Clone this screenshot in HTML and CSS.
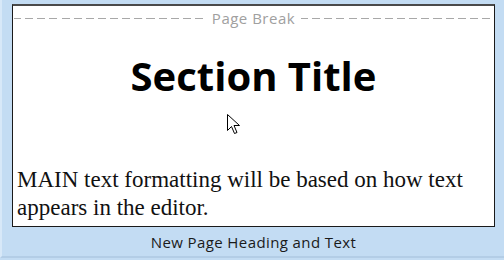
FILE: index.html
```html
<!DOCTYPE html>
<html lang="en">
<head>
    <meta charset="UTF-8">
    <meta name="viewport" content="width=device-width, initial-scale=1.0">
    <title>New Page Heading and Text</title>
    <link rel="stylesheet" href="styles.css">
</head>
<body>
    <div class="frame">
        <div class="page">
            <div class="page-break">
                <span class="dash"></span>
                <span class="break-label">Page Break</span>
                <span class="dash"></span>
            </div>
            <h1 class="section-title">Section Title</h1>
            <p class="main-text">MAIN text formatting will be based on how text appears in the editor.</p>
            <svg class="cursor" width="13" height="21" viewBox="0 0 13 21">
                <path d="M0.5 0.5 L0.5 16.5 L4.5 12.5 L7.5 19.5 L10 18.5 L7 11.5 L12.5 11.5 Z" fill="#fff" stroke="#000" stroke-width="1"/>
            </svg>
        </div>
        <div class="caption">New Page Heading and Text</div>
    </div>
</body>
</html>
```

FILE: styles.css
```css
body {
    margin: 0;
    padding: 0;
    background-color: #c3dcf3;
}

.frame {
    height: 258px;
    padding: 4px 9px 0 10px;
    box-sizing: border-box;
    background-color: #c3dcf3;
    border-left: 2px solid #d7e8f8;
    border-bottom: 2px solid #b3cde6;
}

.page {
    position: relative;
    height: 223px;
    box-sizing: border-box;
    background-color: white;
    border: 1px solid #1a1a1a;
    border-top: 2px solid #4a4a4a;
}

.page-break {
    display: flex;
    align-items: flex-start;
    gap: 6px;
    height: 32px;
    padding: 0 1px;
    margin-top: 2px;
}

.dash {
    flex: 1;
    margin-top: 10px;
    border-top: 1px dashed #a8a8a8;
    border-image: repeating-linear-gradient(90deg, #a8a8a8 0 8px, transparent 8px 12px) 1;
}

.break-label {
    font-family: "Open Sans", sans-serif;
    font-size: 15px;
    letter-spacing: 0.5px;
    line-height: 20px;
    color: #a0a0a0;
}

.section-title {
    margin: 10px 0 0 0;
    text-align: center;
    font-family: "Open Sans", sans-serif;
    font-weight: 700;
    font-size: 40px;
    line-height: 52px;
    color: #000;
}

.main-text {
    margin: 64px 0 0 4px;
    font-family: "Liberation Serif", serif;
    font-size: 23px;
    line-height: 28px;
    color: #111;
}

.cursor {
    position: absolute;
    left: 214px;
    top: 108px;
}

.caption {
    text-align: center;
    font-family: "Open Sans", sans-serif;
    font-size: 15px;
    letter-spacing: 0.4px;
    line-height: 30px;
    color: #1a1a1a;
}
```
